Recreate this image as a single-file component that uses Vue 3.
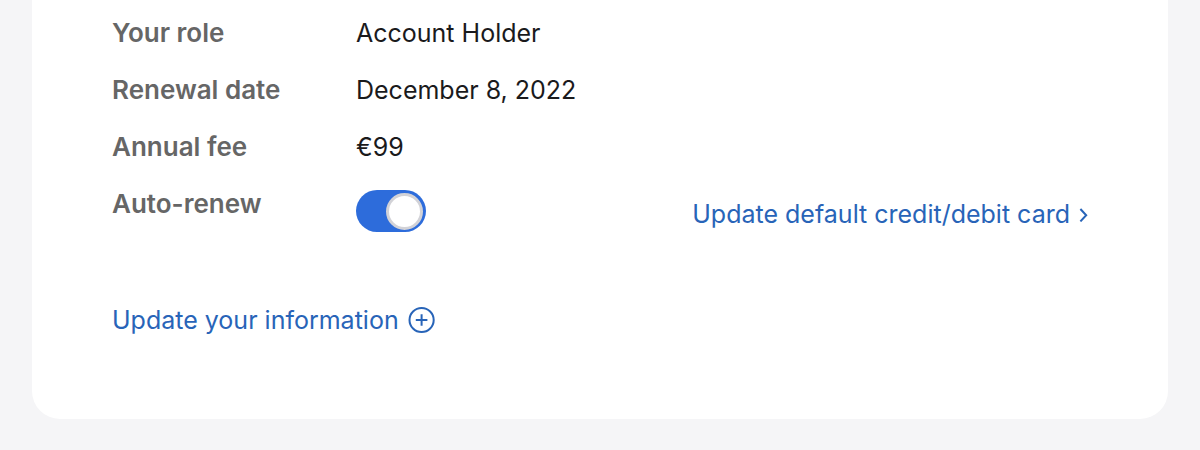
<script setup>
import { ref } from 'vue'

const details = [
  { label: 'Your role', value: 'Account Holder' },
  { label: 'Renewal date', value: 'December 8, 2022' },
  { label: 'Annual fee', value: '€99' },
]
const autoRenew = ref(true)
</script>

<template>
  <main class="page">
    <section class="card">
      <dl class="details">
        <div v-for="item in details" :key="item.label" class="row">
          <dt class="label">{{ item.label }}</dt>
          <dd class="value">{{ item.value }}</dd>
        </div>
      </dl>
      <div class="row renew">
        <label class="label" for="auto-renew">Auto-renew</label>
        <input id="auto-renew" v-model="autoRenew" class="switch" type="checkbox" role="switch" />
        <a class="link card-link" href="#">
          <span>Update default credit/debit card</span>
          <svg class="chevron" viewBox="0 0 9 16" aria-hidden="true"><path d="M1.4 3 L7.2 9.2 L1.4 15.4" /></svg>
        </a>
      </div>
      <a class="link info-link" href="#">
        <span>Update your information</span>
        <svg class="plus" viewBox="0 0 28 28" aria-hidden="true">
          <circle cx="13.6" cy="14" r="12.1" />
          <path d="M13.6 8.2v11.6M7.8 14h11.6" />
        </svg>
      </a>
    </section>
  </main>
</template>

<style>
body {
  background: #f5f5f7;
}
</style>

<style scoped>
.page {
  padding: 0 32px 31px;
  font-family: Inter, "Liberation Sans", sans-serif;
  font-size: 25px;
  line-height: 32px;
  color: #1a1a1c;
}
.card {
  padding: 17px 80px 83px;
  background: #fff;
  border-radius: 0 0 28px 28px;
}
.details {
  margin: 0;
}
.row {
  display: grid;
  grid-template-columns: 244px 1fr;
  margin-bottom: 25px;
}
.label {
  font-size: 26px;
  font-weight: 600;
  color: #666;
}
.value {
  margin: 0;
}
.renew {
  grid-template-columns: 244px 1fr auto;
  align-items: start;
  margin-bottom: 72px;
}
.switch {
  appearance: none;
  display: flex;
  align-items: center;
  justify-content: flex-end;
  width: 70px;
  height: 42px;
  margin: 2px 0 0;
  padding: 0;
  border-radius: 21px;
  background: #2d6cdb;
}
.switch::before {
  content: "";
  box-sizing: border-box;
  width: 37px;
  height: 37px;
  margin: 0 3px;
  border: 3px solid #d2d2d7;
  border-radius: 50%;
  background: #fff;
}
.switch:not(:checked) {
  justify-content: flex-start;
  background: #86868b;
}
.link {
  display: inline-flex;
  align-items: center;
  color: #2864b8;
  text-decoration: none;
}
.card-link {
  gap: 9px;
  margin-top: 10px;
}
.info-link {
  gap: 9px;
}
.chevron {
  width: 9px;
  height: 16px;
  fill: none;
  stroke: currentColor;
  stroke-width: 2;
}
.plus {
  width: 28px;
  height: 28px;
  fill: none;
  stroke: currentColor;
  stroke-width: 2;
}
</style>
